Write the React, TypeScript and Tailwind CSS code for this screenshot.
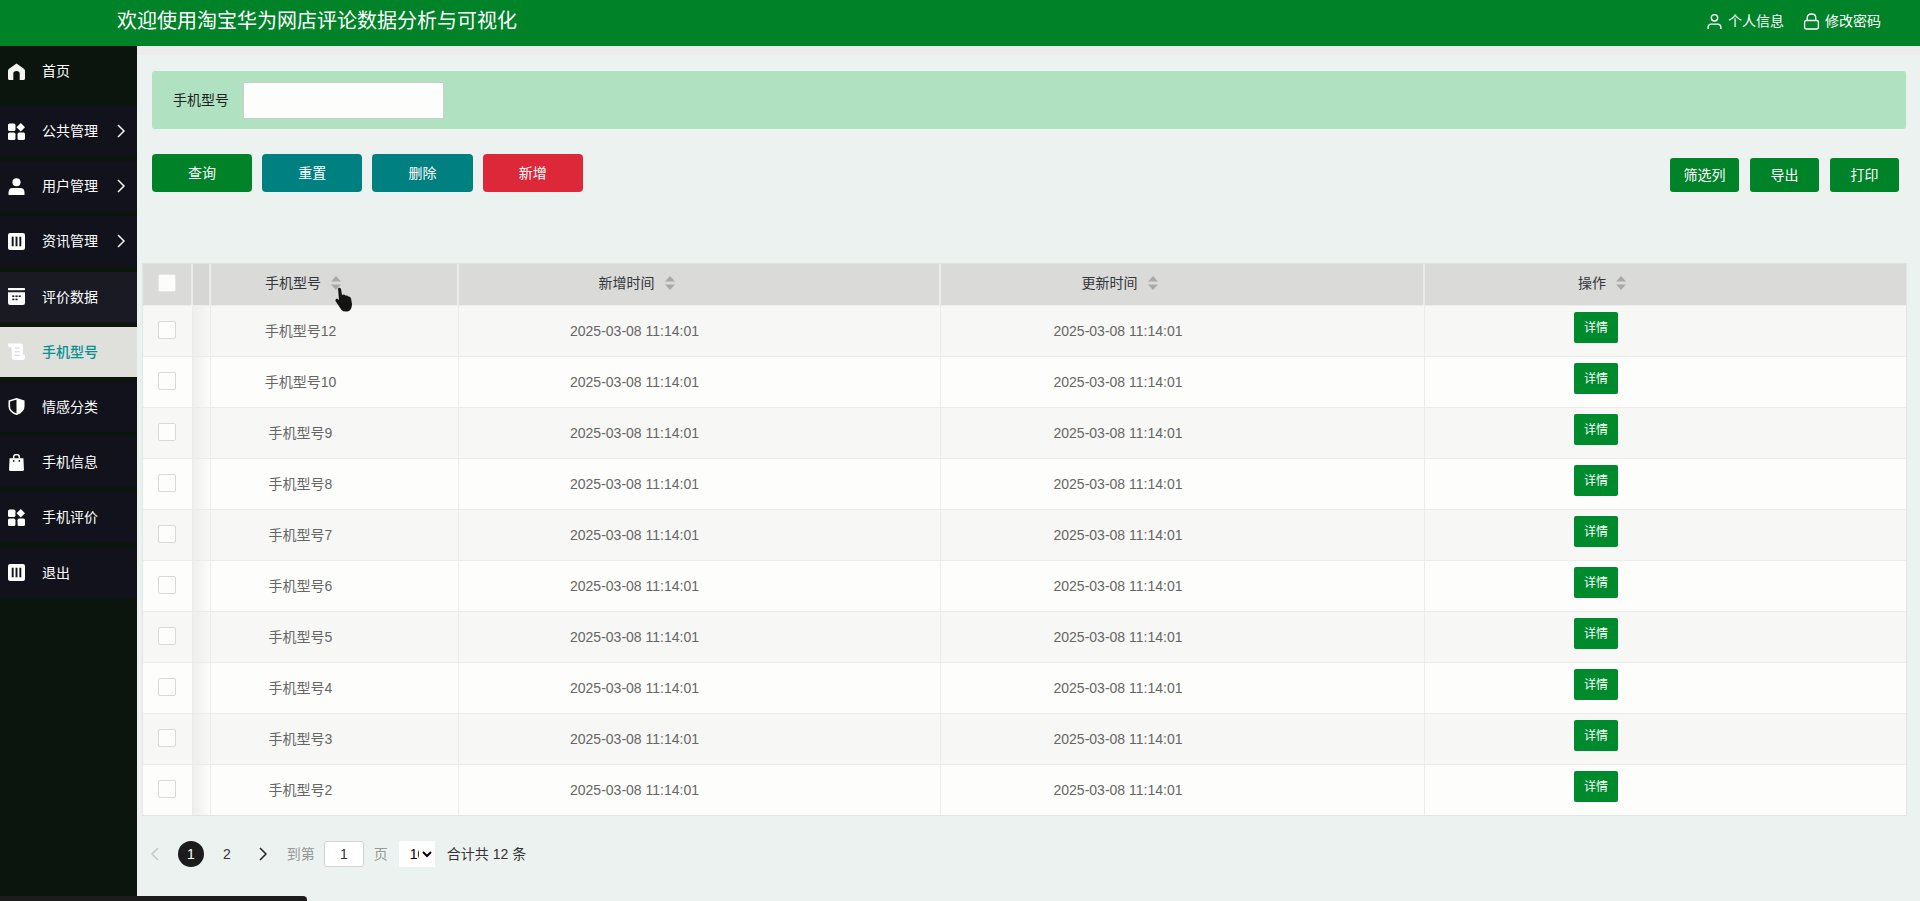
import type { ReactNode } from "react"

function HomeIcon() {
  return (
    <svg viewBox="0 0 16 16" className="w-[17px] h-[17px]" fill="#f4f4f2">
      <path d="M8 .5 L15 5.5 Q16 6.2 16 7.5 V14.5 Q16 16 14.5 16 H11 V10 Q11 7.5 8 7.5 Q5 7.5 5 10 V16 H1.500 Q0 16 0 14.5 V7.5 Q0 6.200 1 5.500 Z" />
    </svg>
  )
}

function AppsIcon() {
  return (
    <svg viewBox="0 0 16 16" className="w-[17px] h-[17px]" fill="#fff">
      <rect x="0" y="0.500" width="7" height="7" rx="1.500" />
      <path d="M12 0 L16 4 L12 8 L8 4 Z" />
      <rect x="0" y="9" width="7" height="7" rx="1.500" />
      <rect x="9" y="9" width="7" height="7" rx="1.500" />
    </svg>
  )
}

function UserIcon() {
  return (
    <svg viewBox="0 0 16 16" className="w-[17px] h-[17px]" fill="#fff">
      <circle cx="8" cy="4" r="3.800" />
      <path d="M0.500 16 V13.500 Q0.500 9.500 4.500 9.500 H11.500 Q15.500 9.500 15.500 13.500 V16 Z" />
    </svg>
  )
}

function ColumnsIcon() {
  return (
    <svg viewBox="0 0 16 16" className="w-[17px] h-[17px]">
      <rect x="0" y="0" width="16" height="16" rx="2" fill="#fff" />
      <rect x="3.500" y="3.500" width="1.800" height="9" fill="#12121c" />
      <rect x="7.100" y="3.500" width="1.800" height="9" fill="#12121c" />
      <rect x="10.700" y="3.500" width="1.800" height="9" fill="#12121c" />
    </svg>
  )
}

function CalendarIcon() {
  return (
    <svg viewBox="0 0 16 16" className="w-[17px] h-[17px]" fill="#fff">
      <rect x="0" y="0" width="16" height="2" rx="0.500" />
      <path d="M0 4 H16 V14 Q16 16 14 16 H2 Q0 16 0 14 Z" />
      <g fill="#1a1a24">
        <rect x="4" y="7" width="2" height="1.500" />
        <rect x="7" y="7" width="2" height="1.500" />
        <rect x="10" y="7" width="2" height="1.500" />
        <rect x="4" y="10" width="2" height="1.500" />
        <rect x="7" y="10" width="2" height="1.500" />
      </g>
    </svg>
  )
}

function ScrollIcon() {
  return (
    <svg viewBox="0 0 16 16" className="w-[17px] h-[17px]" fill="#fff">
      <path d="M0.500 0.500 H12 Q14 0.500 14 3 V11 H16 V13.500 Q16 16 13.500 16 H6 Q3.500 16 3.500 13.500 V4 H1.500 Q0 4 0 2.200 Q0 0.500 0.500 0.500 Z" />
      <rect x="6.500" y="4" width="4.500" height="1.300" fill="#dfe0dc" />
      <rect x="6.500" y="7.500" width="4.500" height="1.300" fill="#dfe0dc" />
      <rect x="6.500" y="11" width="4.500" height="1.300" fill="#dfe0dc" />
    </svg>
  )
}

function ShieldIcon() {
  return (
    <svg viewBox="0 0 16 16" className="w-[17px] h-[17px]">
      <path
        d="M8 0.800 L14.800 2.800 V8 Q14.800 12.800 8 15.300 Q1.200 12.800 1.200 8 V2.800 Z"
        fill="#12121c"
        stroke="#fff"
        strokeWidth="1.500"
      />
      <path d="M8 1 L15 3 V8 Q15 13 8 15.500 Z" fill="#fff" />
    </svg>
  )
}

function BagIcon() {
  return (
    <svg viewBox="0 0 16 16" className="w-[17px] h-[17px]" fill="#fff">
      <path d="M5.300 4.500 V3 Q5.300 0.500 8 0.500 Q10.700 0.500 10.700 3 V4.500" fill="none" stroke="#fff" strokeWidth="1.400" />
      <path d="M1.500 4 H14.500 L15 14.500 Q15 16 13.500 16 H2.500 Q1 16 1 14.500 Z" />
      <circle cx="5.300" cy="6.500" r="0.800" fill="#12121c" />
      <circle cx="10.700" cy="6.500" r="0.800" fill="#12121c" />
    </svg>
  )
}

function ChevronRight({ className }: { className: string }) {
  return (
    <svg viewBox="0 0 8 14" className={className} fill="none" stroke="currentColor" strokeWidth="1.500">
      <path d="M1 1 L7 7 L1 13" />
    </svg>
  )
}

function SortIcon() {
  return (
    <svg viewBox="0 0 10 14" className="w-[10px] h-[14px] shrink-0" fill="#a9a9a9">
      <path d="M5 0 L10 5.500 H0 Z" />
      <path d="M5 14 L10 8.500 H0 Z" />
    </svg>
  )
}

interface MenuItem {
  label: string
  icon: ReactNode
  arrow?: boolean
  className?: string
}

const menu: MenuItem[] = [
  { label: "公共管理", icon: <AppsIcon />, arrow: true },
  { label: "用户管理", icon: <UserIcon />, arrow: true },
  { label: "资讯管理", icon: <ColumnsIcon />, arrow: true },
  { label: "评价数据", icon: <CalendarIcon />, className: "bg-[#1a1a24]" },
  { label: "手机型号", icon: <ScrollIcon />, className: "bg-[#dfe0dc] text-[#0a8f8f] font-medium" },
  { label: "情感分类", icon: <ShieldIcon /> },
  { label: "手机信息", icon: <BagIcon /> },
  { label: "手机评价", icon: <AppsIcon /> },
  { label: "退出", icon: <ColumnsIcon /> },
]

const rows = ["手机型号12", "手机型号10", "手机型号9", "手机型号8", "手机型号7", "手机型号6", "手机型号5", "手机型号4", "手机型号3", "手机型号2"]

function Sidebar() {
  return (
    <aside className="w-[137px] shrink-0 bg-[#0b140d] text-white text-sm">
      <div className="h-[50px] mb-[10px] flex items-center pl-[8px] gap-[17px]">
        <HomeIcon />
        <span>首页</span>
      </div>
      <div className="flex flex-col gap-[5.2px]">
        {menu.map((item) => (
          <div
            key={item.label}
            className={`h-[50px] flex items-center pl-[8px] gap-[17px] ${item.className ?? "bg-[#12121c]"}`}
          >
            {item.icon}
            <span className="flex-1">{item.label}</span>
            {item.arrow && <ChevronRight className="w-[8px] h-[14px] mr-[12px]" />}
          </div>
        ))}
      </div>
    </aside>
  )
}

function HeadCell({ label, className }: { label: string; className: string }) {
  return (
    <th className="border-r-2 border-[#ebebe9] font-normal p-0 last:border-r-0">
      <div className={`flex items-center justify-center gap-[10px] pb-[4px] ${className}`}>
        <span>{label}</span>
        <SortIcon />
      </div>
    </th>
  )
}

function DataTable() {
  return (
    <table className="w-[1765px] table-fixed border-separate border-spacing-0 border border-[#e0e6e3] text-sm">
      <colgroup>
        <col className="w-[50px]" />
        <col className="w-[18px]" />
        <col className="w-[248px]" />
        <col className="w-[482px]" />
        <col className="w-[484px]" />
        <col />
      </colgroup>
      <thead>
        <tr className="h-[41px] bg-[#dadad8] text-[#33363a]">
          <th className="border-r-2 border-[#ebebe9] p-0">
            <div className="w-[18px] h-[18px] ml-[15px] mb-[4px] bg-[#fcfcfa] border border-[#e6e6e4] rounded-[2px]" />
          </th>
          <th className="border-r-2 border-[#ebebe9] p-0 bg-[#d6d6d4]" />
          <HeadCell label="手机型号" className="pr-[62px]" />
          <HeadCell label="新增时间" className="pr-[125px]" />
          <HeadCell label="更新时间" className="pr-[125px]" />
          <HeadCell label="操作" className="pr-[127px]" />
        </tr>
      </thead>
      <tbody className="text-[#666]">
        {rows.map((name, i) => (
          <tr key={name} className={i % 2 === 0 ? "bg-[#f7f7f5]" : "bg-[#fdfdfb]"}>
            <td className="h-[51px] border-t border-r border-[#ecedeb] p-0">
              <div className="w-[18px] h-[18px] ml-[15px] mb-[2px] border border-[#d9d9d7] bg-[#fdfdfb] rounded-[2px]" />
            </td>
            <td className="border-t border-r border-[#ecedeb] p-0 bg-linear-to-r from-[#eeeeec] to-transparent" />
            <td className="border-t border-r border-[#ecedeb] p-0 pr-[68px] text-center">{name}</td>
            <td className="border-t border-r border-[#ecedeb] p-0 pr-[130px] text-center">2025-03-08 11:14:01</td>
            <td className="border-t border-r border-[#ecedeb] p-0 pr-[129px] text-center">2025-03-08 11:14:01</td>
            <td className="border-t border-[#ecedeb] p-0 pr-[139px] align-top text-center">
              <button className="mt-[6px] w-[44px] h-[31px] bg-[#008a2e] text-white text-xs rounded-[2px]">详情</button>
            </td>
          </tr>
        ))}
      </tbody>
    </table>
  )
}

function Pagination() {
  return (
    <div className="mt-[25px] h-[26px] flex items-center text-sm ml-[9px]">
      <ChevronRight className="w-[8px] h-[14px] rotate-180 text-[#c4c8c6]" />
      <span className="ml-[19px] w-[26px] h-[26px] rounded-full bg-[#1c1c1c] text-white flex items-center justify-center">1</span>
      <span className="ml-[19px] text-[#333]">2</span>
      <ChevronRight className="ml-[28px] w-[8px] h-[14px] text-[#222]" />
      <span className="ml-[20px] text-[#999]">到第</span>
      <input
        readOnly
        value="1"
        className="ml-[9px] w-[40px] h-[26px] bg-white border border-[#cfd3d1] rounded-[3px] text-center text-[#333]"
      />
      <span className="ml-[10px] text-[#999]">页</span>
      <select className="ml-[11px] w-[36px] h-[26px] pl-[7px] bg-white text-black border-0 text-sm">
        <option>10</option>
      </select>
      <span className="ml-[12px] text-[#333]">合计共 12 条</span>
    </div>
  )
}

export default function App() {
  return (
    <div className="relative h-[901px] overflow-hidden bg-[#ecf2ef] font-['Liberation_Sans','Noto_Sans_CJK_SC',sans-serif]">
      <header className="h-[46px] bg-[#008229] text-white flex items-center pl-[117px] pr-[39px] pb-[4px]">
        <h1 className="text-xl font-normal flex-1">欢迎使用淘宝华为网店评论数据分析与可视化</h1>
        <div className="flex items-center text-sm">
          <svg viewBox="0 0 16 16" className="w-[17px] h-[17px] mr-[5px]" fill="none" stroke="#fff" strokeWidth="1.300">
            <circle cx="8" cy="4.500" r="3" />
            <path d="M2 15 V13.500 Q2 10.500 5 10.500 H11 Q14 10.500 14 13.500 V15" />
          </svg>
          <span>个人信息</span>
          <svg viewBox="0 0 16 16" className="w-[17px] h-[17px] ml-[19px] mr-[5px]" fill="none" stroke="#fff" strokeWidth="1.300">
            <rect x="1.500" y="7" width="13" height="8" rx="1.500" />
            <path d="M4 7 V4.500 Q4 1 8 1 Q12 1 12 4.500 V7" />
          </svg>
          <span>修改密码</span>
        </div>
      </header>

      <div className="flex h-[855px]">
        <Sidebar />
        <main className="flex-1 pl-[5px]">
          <div className="-ml-[5px] h-[9px] bg-[#ececea]" />
          <div className="ml-[10px] mr-[14px] mt-[16px] h-[58px] bg-[#b0e2c1] rounded-[3px] flex items-center pl-[21px] text-sm text-[#222]">
            <span>手机型号</span>
            <input className="ml-[14px] w-[201px] h-[37px] bg-[#fdfdfb] border border-[#c8cfcb]" />
          </div>

          <div className="ml-[10px] mr-[21px] mt-[25px] flex items-end justify-between text-sm text-white">
            <div className="flex gap-[10px]">
              <button className="w-[100.2px] h-[38px] rounded-[4px] bg-[#008229]">查询</button>
              <button className="w-[100.2px] h-[38px] rounded-[4px] bg-[#008080]">重置</button>
              <button className="w-[100.2px] h-[38px] rounded-[4px] bg-[#008080]">删除</button>
              <button className="w-[100.2px] h-[38px] rounded-[4px] bg-[#dc2839]">新增</button>
            </div>
            <div className="flex gap-[11px]">
              <button className="w-[69px] h-[34px] rounded-[3px] bg-[#008229]">筛选列</button>
              <button className="w-[69px] h-[34px] rounded-[3px] bg-[#008229]">导出</button>
              <button className="w-[69px] h-[34px] rounded-[3px] bg-[#008229]">打印</button>
            </div>
          </div>

          <div className="mt-[71px]">
            <DataTable />
          </div>
          <Pagination />
        </main>
      </div>

      {/* mouse cursor caught in the screenshot */}
      <svg viewBox="0 0 18 25" className="absolute left-[335px] top-[287px] w-[18px] h-[25px]">
        <path
          d="M3 1.500 Q5 0 6 2 L7 8 Q9 7 10.500 8.500 Q12.500 8 13.500 9.500 Q15.500 9.500 16 11.500 L17 17 Q17 22 14 24 Q9 25.500 6.500 23 L0.500 14 Q0 12 2 11.500 L4 13 Z"
          fill="#141414"
        />
      </svg>

      {/* taskbar edge at the very bottom */}
      <div className="absolute left-0 bottom-0 w-[307px] h-[5px] bg-[#1c1c1c] rounded-tr-[4px]" />
    </div>
  )
}
